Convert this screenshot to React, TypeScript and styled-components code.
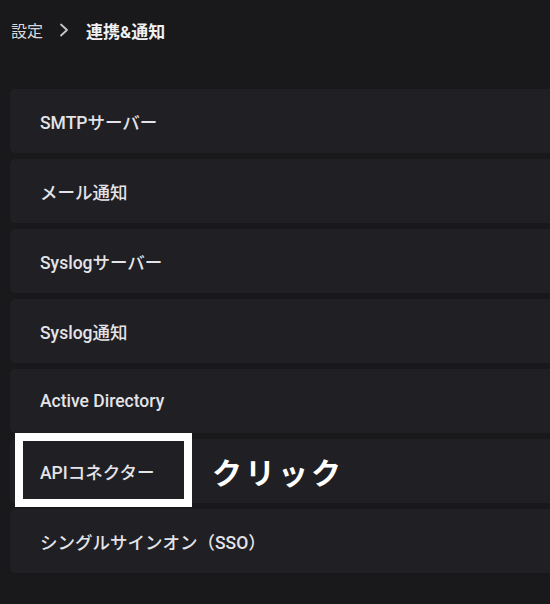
import React from 'react';
import styled, { createGlobalStyle } from 'styled-components';

const GlobalStyle = createGlobalStyle`
  html, body {
    margin: 0;
    padding: 0;
    background: #19191b;
  }
  body {
    font-family: Roboto, "Noto Sans CJK JP", sans-serif;
    color: #e2e2e6;
  }
`;

const Page = styled.div`
  width: 550px;
  height: 604px;
  overflow: hidden;
  background: #19191b;
`;

const Breadcrumb = styled.div`
  display: flex;
  align-items: center;
  height: 60px;
  padding-left: 11px;
  font-size: 16px;
  color: #e0e0e0;
`;

const Crumb = styled.span<{ $current?: boolean }>`
  font-size: ${(p) => (p.$current ? '17px' : '16px')};
  font-weight: ${(p) => (p.$current ? 700 : 400)};
  color: ${(p) => (p.$current ? '#f0f0f2' : '#d8d8da')};
`;

const Chevron = styled.svg`
  width: 10px;
  height: 14px;
  margin: 0 17px 0 16px;
`;

const List = styled.div`
  display: flex;
  flex-direction: column;
  gap: 6px;
  margin-top: 29px;
  padding-left: 10px;
`;

const Row = styled.div`
  position: relative;
  display: flex;
  align-items: center;
  height: 64px;
  width: 560px;
  padding-left: 30px;
  box-sizing: border-box;
  background: #1f1f24;
  border-radius: 5px;
  font-size: 17.5px;
  font-weight: 500;
  color: #e4e4e8;
`;

const Highlight = styled.div`
  position: absolute;
  left: 5px;
  top: -6px;
  width: 177px;
  height: 74px;
  box-sizing: border-box;
  border: 8px solid #ffffff;
`;

const Callout = styled.span`
  position: absolute;
  left: 202px;
  top: 50%;
  transform: translateY(-50%);
  font-family: "Noto Sans CJK JP", sans-serif;
  font-size: 30px;
  font-weight: 700;
  letter-spacing: 3px;
  color: #ffffff;
`;

const items = [
  'SMTPサーバー',
  'メール通知',
  'Syslogサーバー',
  'Syslog通知',
  'Active Directory',
  'APIコネクター',
  'シングルサインオン（SSO）',
];

const App = () => {
  return (
    <>
      <GlobalStyle />
      <Page>
        <Breadcrumb>
          <Crumb>設定</Crumb>
          <Chevron viewBox="0 0 10 14" fill="none">
            <path d="M2 1.5 L8 7 L2 12.5" stroke="#c8c8cc" strokeWidth="1.8" strokeLinecap="round" strokeLinejoin="round" />
          </Chevron>
          <Crumb $current>連携&amp;通知</Crumb>
        </Breadcrumb>

        <List>
          {items.map((label) => (
            <Row key={label}>
              {label}
              {label === 'APIコネクター' && (
                <>
                  <Highlight />
                  <Callout>クリック</Callout>
                </>
              )}
            </Row>
          ))}
        </List>
      </Page>
    </>
  );
};

export default App;
